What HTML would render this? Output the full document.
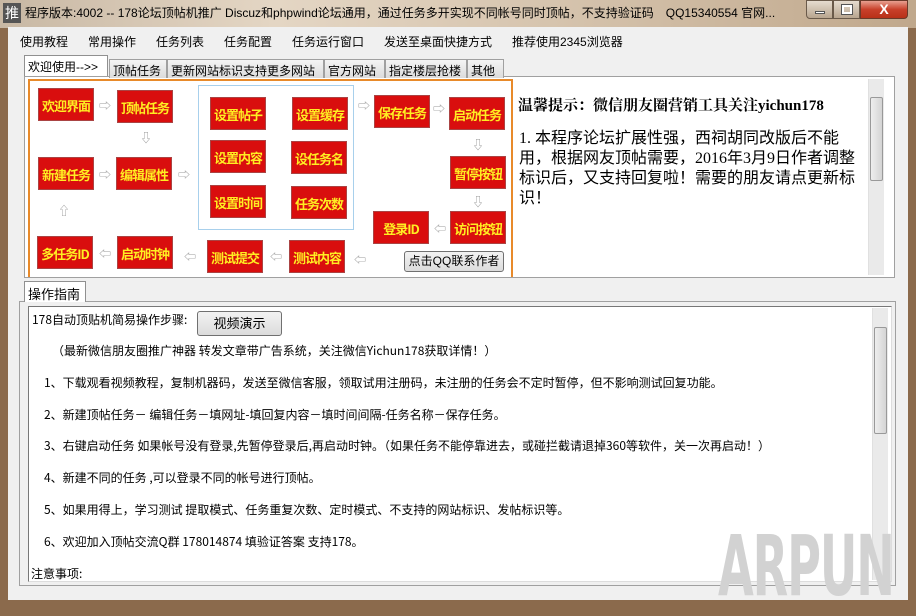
<!DOCTYPE html>
<html><head><meta charset="utf-8"><style>
*{margin:0;padding:0;box-sizing:border-box}
body{width:916px;height:608px;overflow:hidden;position:relative;background:#8b6a4c;font-family:"Liberation Sans","SimSun","Noto Sans CJK SC",sans-serif;font-size:12px;color:#000}
.a{position:absolute}
#title{left:0;top:0;width:916px;height:28px;background:linear-gradient(90deg,#c8b8a4,#e4d6c4 30%,#d6c4ae 60%,#c0a88c);}
#client{left:8px;top:27px;width:900px;height:573px;background:#f0f0f0}
.menu span{position:absolute;top:33px;font-size:12px}
.tab{position:absolute;height:19px;border:1px solid #a0a0a0;border-bottom:none;background:linear-gradient(#f4f4f4,#dcdcdc);font-size:12px;padding:2px 3px 0}
.box{position:absolute;background:#d90e0e;color:#ffee22;font-weight:bold;font-size:13px;text-align:center;line-height:33px;width:56px;height:33px;border:1px solid #a44;font-family:"Noto Sans CJK SC",sans-serif;letter-spacing:-1px}
.ar{position:absolute;color:#999;font-size:12px}
.sb{position:absolute;background:#eaeaea;border-left:1px solid #e0e0e0}
.btn{position:absolute;border:1px solid #707070;border-radius:3px;background:linear-gradient(#f2f2f2,#dcdcdc);text-align:center}
.ln{position:absolute;left:44px;font-family:"SimSun","Noto Sans CJK SC",sans-serif;font-size:12px;white-space:nowrap}
</style></head><body>
<div id="title" class="a"></div>
<div class="a" style="left:3px;top:3px;width:18px;height:20px;background:#555;color:#fff;font-size:14px;text-align:center;line-height:20px">推</div>
<div class="a" style="left:25px;top:4px;font-size:12px;white-space:nowrap">程序版本:4002 -- 178论坛顶帖机推广 Discuz和phpwind论坛通用，通过任务多开实现不同帐号同时顶帖，不支持验证码　QQ15340554 官网...</div>
<div class="a" style="left:806px;top:0;width:27px;height:19px;border:1px solid #6a5a4a;border-radius:0 0 0 4px;background:linear-gradient(#e6dccf,#b8a58f)"><div class="a" style="left:8px;top:10px;width:10px;height:3px;background:#fff;border:1px solid #555"></div></div>
<div class="a" style="left:833px;top:0;width:27px;height:19px;border:1px solid #6a5a4a;background:linear-gradient(#e6dccf,#b8a58f)"><div class="a" style="left:8px;top:4px;width:10px;height:9px;border:2px solid #fff;outline:1px solid #555"></div></div>
<div class="a" style="left:860px;top:0;width:48px;height:19px;border:1px solid #6a3a2a;border-radius:0 0 4px 0;background:linear-gradient(#e8a090,#c8402a 50%,#b83018);color:#fff;font-weight:bold;font-size:14px;text-align:center;line-height:17px">X</div>
<div id="client" class="a"></div>
<div class="menu">
<span style="left:20px">使用教程</span><span style="left:88px">常用操作</span><span style="left:156px">任务列表</span><span style="left:224px">任务配置</span><span style="left:292px">任务运行窗口</span><span style="left:384px">发送至桌面快捷方式</span><span style="left:512px">推荐使用2345浏览器</span>
</div>
<div class="a" style="left:24px;top:76px;width:871px;height:202px;border:1px solid #a0a0a0;background:#fff"></div>
<div class="tab" style="left:24px;top:55px;width:84px;height:21px;background:#fff;border-color:#909090">欢迎使用--&gt;&gt;</div>
<div class="tab" style="left:109px;top:59px;width:58px">顶帖任务</div>
<div class="tab" style="left:167px;top:59px;width:157px">更新网站标识支持更多网站</div>
<div class="tab" style="left:324px;top:59px;width:61px">官方网站</div>
<div class="tab" style="left:385px;top:59px;width:82px">指定楼层抢楼</div>
<div class="tab" style="left:467px;top:59px;width:37px">其他</div>
<div class="a" style="left:28px;top:79px;width:485px;height:198px;border:2px solid #e88a2a;border-bottom:none;background:#fff"></div>
<div class="a" style="left:198px;top:85px;width:156px;height:145px;border:1px solid #a8d0ec"></div>
<div class="box" style="left:38px;top:88px">欢迎界面</div>
<div class="box" style="left:117px;top:90px">顶帖任务</div>
<div class="box" style="left:38px;top:157px">新建任务</div>
<div class="box" style="left:116px;top:157px">编辑属性</div>
<div class="box" style="left:37px;top:236px">多任务ID</div>
<div class="box" style="left:117px;top:236px">启动时钟</div>
<div class="box" style="left:207px;top:240px">测试提交</div>
<div class="box" style="left:289px;top:240px">测试内容</div>
<div class="box" style="left:210px;top:97px">设置帖子</div>
<div class="box" style="left:292px;top:97px">设置缓存</div>
<div class="box" style="left:210px;top:140px">设置内容</div>
<div class="box" style="left:291px;top:141px">设任务名</div>
<div class="box" style="left:210px;top:185px">设置时间</div>
<div class="box" style="left:291px;top:186px">任务次数</div>
<div class="box" style="left:374px;top:95px">保存任务</div>
<div class="box" style="left:449px;top:97px">启动任务</div>
<div class="box" style="left:450px;top:156px">暂停按钮</div>
<div class="box" style="left:450px;top:211px">访问按钮</div>
<div class="box" style="left:373px;top:211px">登录ID</div>
<div class="ar" style="left:99px;top:97px">⇨</div>
<div class="ar" style="left:99px;top:166px">⇨</div>
<div class="ar" style="left:178px;top:166px">⇨</div>
<div class="ar" style="left:358px;top:97px">⇨</div>
<div class="ar" style="left:433px;top:100px">⇨</div>
<div class="ar" style="left:140px;top:129px">⇩</div>
<div class="ar" style="left:472px;top:136px">⇩</div>
<div class="ar" style="left:472px;top:193px">⇩</div>
<div class="ar" style="left:58px;top:202px">⇧</div>
<div class="ar" style="left:99px;top:245px">⇦</div>
<div class="ar" style="left:184px;top:248px">⇦</div>
<div class="ar" style="left:270px;top:248px">⇦</div>
<div class="ar" style="left:354px;top:251px">⇦</div>
<div class="ar" style="left:434px;top:220px">⇦</div>
<div class="btn" style="left:404px;top:251px;width:100px;height:21px;font-size:12px;line-height:19px">点击QQ联系作者</div>
<div class="a" style="left:518px;top:94px;font-family:'Liberation Serif','Noto Serif CJK SC',serif;font-weight:bold;font-size:15px;white-space:nowrap">温馨提示：微信朋友圈营销工具关注yichun178</div>
<div class="a" style="left:519px;top:129px;width:338px;font-size:16px;line-height:20px;font-family:'Liberation Serif','Noto Sans CJK SC',sans-serif">1. 本程序论坛扩展性强，西祠胡同改版后不能用，根据网友顶帖需要，2016年3月9日作者调整标识后，又支持回复啦！需要的朋友请点更新标识！</div>
<div class="sb" style="left:868px;top:79px;width:16px;height:196px"><div class="a" style="left:1px;top:18px;width:13px;height:84px;background:linear-gradient(90deg,#eee,#d4d4d4);border:1px solid #999;border-radius:2px"></div></div>
<div class="a" style="left:19px;top:301px;width:877px;height:285px;border:1px solid #a0a0a0;background:#f0f0f0"></div>
<div class="tab" style="left:24px;top:281px;width:62px;height:21px;background:#fff;border-color:#909090;font-size:13px">操作指南</div>
<div class="a" style="left:28px;top:306px;width:864px;height:276px;border:1px solid #777;border-right-color:#ddd;border-bottom-color:#ddd;background:#fff"></div>
<div class="sb" style="left:872px;top:308px;width:16px;height:272px"><div class="a" style="left:1px;top:19px;width:13px;height:107px;background:linear-gradient(90deg,#eee,#d4d4d4);border:1px solid #999;border-radius:2px"></div></div>
<div class="ln" style="left:32px;top:311px">178自动顶贴机简易操作步骤:</div>
<div class="btn" style="left:197px;top:311px;width:85px;height:25px;font-size:13px;line-height:23px">视频演示</div>
<div class="ln" style="top:342px;left:52px">（最新微信朋友圈推广神器 转发文章带广告系统，关注微信Yichun178获取详情！）</div>
<div class="ln" style="top:374px">1、下载观看视频教程，复制机器码，发送至微信客服，领取试用注册码，未注册的任务会不定时暂停，但不影响测试回复功能。</div>
<div class="ln" style="top:406px">2、新建顶帖任务－ 编辑任务－填网址-填回复内容－填时间间隔-任务名称－保存任务。</div>
<div class="ln" style="top:437px">3、右键启动任务 如果帐号没有登录,先暂停登录后,再启动时钟。（如果任务不能停靠进去，或碰拦截请退掉360等软件，关一次再启动！）</div>
<div class="ln" style="top:469px">4、新建不同的任务 ,可以登录不同的帐号进行顶帖。</div>
<div class="ln" style="top:501px">5、如果用得上，学习测试 提取模式、任务重复次数、定时模式、不支持的网站标识、发帖标识等。</div>
<div class="ln" style="top:533px">6、欢迎加入顶帖交流Q群 178014874 填验证答案 支持178。</div>
<div class="ln" style="left:31px;top:565px">注意事项:</div>
<div class="a" style="left:718px;top:516px;font-size:84px;line-height:100px;font-weight:bold;color:#d2d2d2;font-family:'DejaVu Sans',sans-serif;letter-spacing:-2px;transform:scaleX(0.55);transform-origin:left;white-space:nowrap">ARPUN</div>
</body></html>
